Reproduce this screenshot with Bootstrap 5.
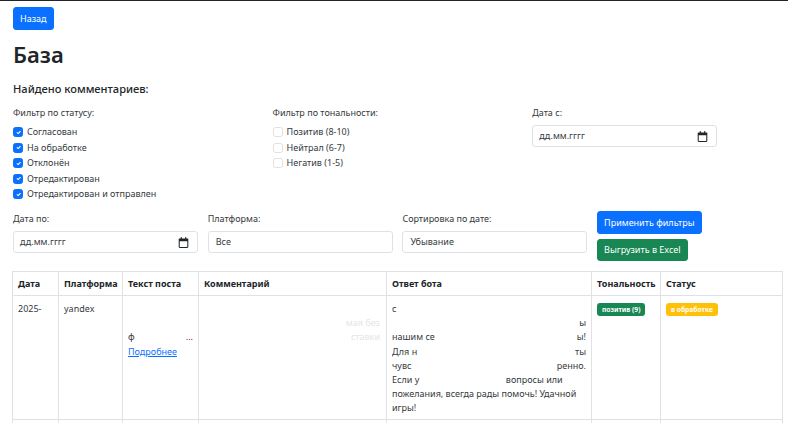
<!DOCTYPE html>
<html lang="ru">
<head>
<meta charset="utf-8">
<title>База</title>
<link href="https://cdn.jsdelivr.net/npm/bootstrap@5.3.0/dist/css/bootstrap.min.css" rel="stylesheet">
<style>
html,body{height:423px;overflow:hidden}
body{font-family:"Noto Sans","Open Sans",sans-serif;font-size:9px;line-height:14px;color:#212529;border-top:1px solid #212529;background:#fff}
.page-wrap{padding:6px 6px 0 13px}
.btn-tiny{font-size:9px;line-height:14px;padding:4px 6px;border-radius:3px;display:inline-block;height:23px}
.btn-primary.btn-tiny{background:#0a70ff;border-color:#0a70ff}
.page-title{font-size:22px;font-weight:600;line-height:29px;margin:10px 0 12px}
.found-title{font-size:11.1px;font-weight:500;line-height:16px;margin:0 0 9px}
.filters-top{display:grid;grid-template-columns:259.6px 259.6px 185px}
.filters-bottom{display:grid;grid-template-columns:194.7px 194.7px 194.7px auto;height:50px;margin-top:10px}
.lbl{display:block;line-height:14px;margin:0 0 4.5px;color:#343a40}
.lbl-date{margin-bottom:5px}
.chk-row{display:flex;align-items:center;gap:4px;height:15.5px;color:#343a40}
.chk-box{width:10px;height:10px;margin:0;border-radius:2.5px;border:1px solid #dee2e6;background:#fff;flex:none;display:flex;align-items:center;justify-content:center}
.chk-box.on{background:#0a70ff;border-color:#0a70ff}
.field-box{width:185px;height:22px;border:1px solid #dee2e6;border-radius:3px;padding:0 7px;display:flex;align-items:center;justify-content:space-between;color:#343a40;background:#fff}
.field-date{padding:0 8px 0 6px}
.btn-stack{display:flex;flex-direction:column;align-items:flex-start;gap:5px;margin-top:-1px}
.btn-stack .btn-tiny{padding:4px 6px}
.btn-stack .btn-success{height:22px;padding-top:3px}
.data-tbl{width:770px;table-layout:fixed;border-collapse:collapse;margin:9px 0 0 -1px}
.data-tbl th,.data-tbl td{border:1px solid #dee2e6;padding:0 5px;vertical-align:top;font-size:9px;line-height:14.2px;color:#212529}
.data-tbl th{height:24px;padding-top:5px;font-weight:700;white-space:nowrap}
.data-tbl td{padding-top:6px;height:124px;color:#343a40}
.ln{height:14.2px;white-space:nowrap;overflow:hidden;display:flex;justify-content:space-between}
.ln-faded{color:#e3e5e8;justify-content:flex-end;padding-right:1px}
.pill{display:inline-block;font-size:6.7px;font-weight:700;line-height:8px;padding:2.5px 5px;border-radius:3px;white-space:nowrap;vertical-align:top;margin-top:1px}
.pill-white{color:#fff!important}
a.more{color:#0a70ff}
</style>
</head>
<body>
<div class="page-wrap">
  <a href="#" class="btn btn-primary btn-tiny">Назад</a>
  <h1 class="page-title">База</h1>
  <h5 class="found-title">Найдено комментариев:</h5>
  <div class="filters-top">
    <div>
      <span class="lbl">Фильтр по статусу:</span>
      <div class="chk-row"><span class="chk-box on"><svg width="7" height="7" viewBox="0 0 20 20"><path fill="none" stroke="#fff" stroke-width="3" stroke-linecap="round" stroke-linejoin="round" d="m6 10 3 3 6-6"/></svg></span>Согласован</div>
      <div class="chk-row"><span class="chk-box on"><svg width="7" height="7" viewBox="0 0 20 20"><path fill="none" stroke="#fff" stroke-width="3" stroke-linecap="round" stroke-linejoin="round" d="m6 10 3 3 6-6"/></svg></span>На обработке</div>
      <div class="chk-row"><span class="chk-box on"><svg width="7" height="7" viewBox="0 0 20 20"><path fill="none" stroke="#fff" stroke-width="3" stroke-linecap="round" stroke-linejoin="round" d="m6 10 3 3 6-6"/></svg></span>Отклонён</div>
      <div class="chk-row"><span class="chk-box on"><svg width="7" height="7" viewBox="0 0 20 20"><path fill="none" stroke="#fff" stroke-width="3" stroke-linecap="round" stroke-linejoin="round" d="m6 10 3 3 6-6"/></svg></span>Отредактирован</div>
      <div class="chk-row"><span class="chk-box on"><svg width="7" height="7" viewBox="0 0 20 20"><path fill="none" stroke="#fff" stroke-width="3" stroke-linecap="round" stroke-linejoin="round" d="m6 10 3 3 6-6"/></svg></span>Отредактирован и отправлен</div>
    </div>
    <div>
      <span class="lbl">Фильтр по тональности:</span>
      <div class="chk-row"><span class="chk-box"></span>Позитив (8-10)</div>
      <div class="chk-row"><span class="chk-box"></span>Нейтрал (6-7)</div>
      <div class="chk-row"><span class="chk-box"></span>Негатив (1-5)</div>
    </div>
    <div>
      <span class="lbl lbl-date">Дата с:</span>
      <div class="field-box field-date"><span>дд.мм.гггг</span><svg width="11" height="11" viewBox="0 0 16 16"><path fill="#212529" d="M4 0h1.5v2h5V0H12v2h2a1 1 0 0 1 1 1v11a2 2 0 0 1-2 2H3a2 2 0 0 1-2-2V3a1 1 0 0 1 1-1h2zM2.5 6v8c0 .3.2.5.5.5h10c.3 0 .5-.2.5-.5V6z"/></svg></div>
    </div>
  </div>
  <div class="filters-bottom">
    <div>
      <span class="lbl lbl-date">Дата по:</span>
      <div class="field-box field-date"><span>дд.мм.гггг</span><svg width="11" height="11" viewBox="0 0 16 16"><path fill="#212529" d="M4 0h1.5v2h5V0H12v2h2a1 1 0 0 1 1 1v11a2 2 0 0 1-2 2H3a2 2 0 0 1-2-2V3a1 1 0 0 1 1-1h2zM2.5 6v8c0 .3.2.5.5.5h10c.3 0 .5-.2.5-.5V6z"/></svg></div>
    </div>
    <div>
      <span class="lbl lbl-date">Платформа:</span>
      <div class="field-box"><span>Все</span></div>
    </div>
    <div>
      <span class="lbl lbl-date">Сортировка по дате:</span>
      <div class="field-box"><span>Убывание</span></div>
    </div>
    <div class="btn-stack">
      <a href="#" class="btn btn-primary btn-tiny">Применить фильтры</a>
      <a href="#" class="btn btn-success btn-tiny">Выгрузить в Excel</a>
    </div>
  </div>
  <table class="data-tbl">
    <colgroup><col style="width:46px"><col style="width:64px"><col style="width:76px"><col style="width:188px"><col style="width:205px"><col style="width:69px"><col style="width:122px"></colgroup>
    <thead><tr><th>Дата</th><th>Платформа</th><th>Текст поста</th><th>Комментарий</th><th>Ответ бота</th><th>Тональность</th><th>Статус</th></tr></thead>
    <tbody>
      <tr>
        <td>2025-</td>
        <td>yandex</td>
        <td><div class="ln"></div><div class="ln"></div><div class="ln"><span>ф</span><span>...</span></div><a href="#" class="more">Подробнее</a></td>
        <td><div class="ln"></div><div class="ln ln-faded">мая без</div><div class="ln ln-faded">ставки</div></td>
        <td><div class="ln">с</div><div class="ln"><span></span><span>ы</span></div><div class="ln"><span>нашим се</span><span>ы!</span></div><div class="ln"><span>Для н</span><span>ты</span></div><div class="ln"><span>чувс</span><span>ренно.</span></div><div class="ln"><span>Если у</span><span>вопросы или&nbsp;&nbsp;&nbsp;&nbsp;&nbsp;&nbsp;&nbsp;&nbsp;&nbsp;&nbsp;</span></div><div class="ln">пожелания, всегда рады помочь! Удачной</div><div class="ln">игры!</div></td>
        <td><span class="pill text-bg-success">позитив (9)</span></td>
        <td><span class="pill text-bg-warning pill-white">в обработке</span></td>
      </tr>
      <tr><td></td><td></td><td></td><td></td><td></td><td></td><td></td></tr>
    </tbody>
  </table>
</div>
</body>
</html>
